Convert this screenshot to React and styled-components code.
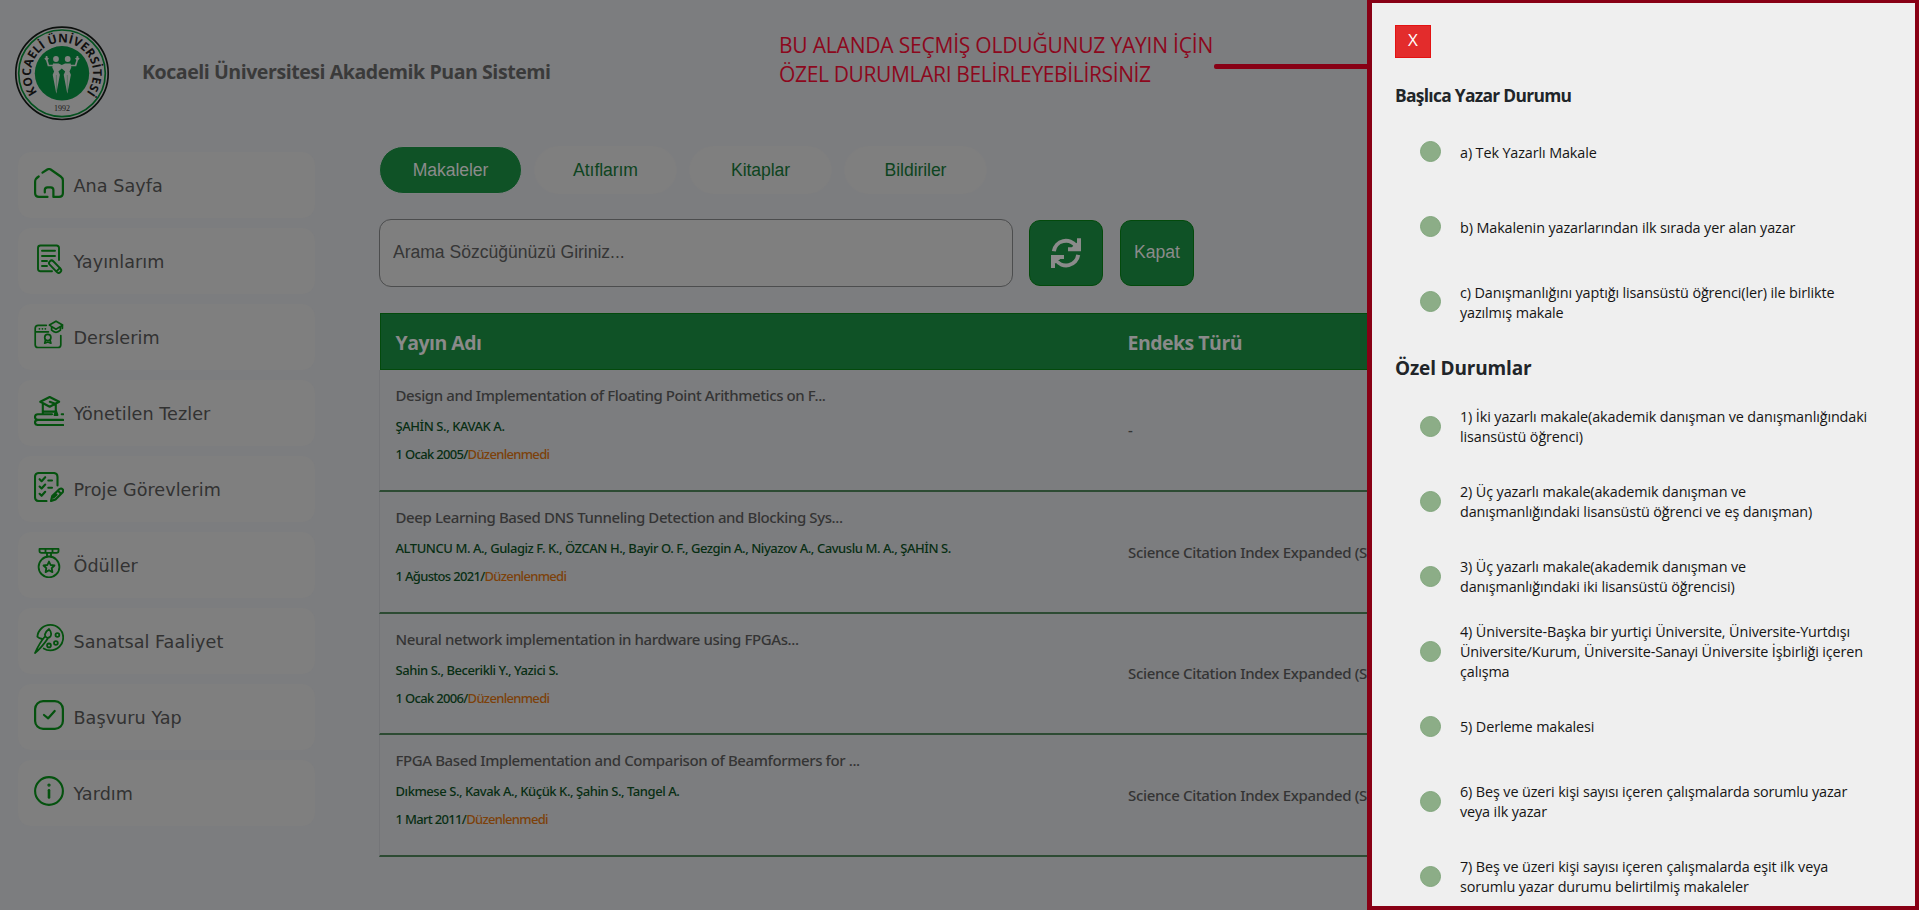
import React from 'react';
import styled, { createGlobalStyle } from 'styled-components';

const humanist = '"Open Sans", "Noto Sans", sans-serif';
const humanistMedium = '"Noto Sans", "Open Sans", sans-serif';
const grotesk = '"Liberation Sans", Arial, sans-serif';
const maroon = '#880015';
const iconGreen = '#04520e';

const GlobalStyle = createGlobalStyle`
  *, *::before, *::after { box-sizing: border-box; }
  body { margin: 0; background: #7c7d7f; font-family: ${humanist}; }
  button, input { font: inherit; }
`;

const Page = styled.div`
  position: relative;
  display: flex;
  flex-direction: column;
  width: 1919px;
  height: 910px;
  overflow: hidden;
  background: #7c7d7f;
`;

const Header = styled.header`
  display: flex;
  align-items: center;
  gap: 32px;
  height: 146px;
  padding-left: 14px;
`;

const AppTitle = styled.h1`
  margin: 0 0 2px;
  color: #3a3a3a;
  font-size: 19.6px;
  font-weight: 700;
  letter-spacing: -0.47px;
  line-height: 28px;
`;

const Body = styled.div`
  display: flex;
  gap: 64px;
  padding-left: 18px;
`;

const Sidebar = styled.nav`
  display: flex;
  flex: none;
  flex-direction: column;
  gap: 10px;
  width: 297px;
  padding-top: 6px;
`;

const NavItem = styled.a`
  display: flex;
  gap: 9.5px;
  height: 66px;
  padding: 16px;
  border-radius: 13px;
  background: #7f7f7f;
  color: #323232;
`;

const NavIcon = styled.svg`
  display: block;
  flex: none;
  width: 30px;
  height: 30px;
  fill: none;
  stroke: ${iconGreen};
  stroke-width: ${(p) => p.$stroke || 1.9};
  stroke-linecap: round;
  stroke-linejoin: round;
`;

const NavLabel = styled.span`
  margin-top: 3px;
  font-family: "DejaVu Sans", Verdana, sans-serif;
  font-size: 17.6px;
  letter-spacing: 0.04px;
  line-height: 30px;
  white-space: nowrap;
`;

const Main = styled.main`
  flex: 1;
  min-width: 0;
`;

const Tabs = styled.div`
  display: flex;
  gap: 12px;
`;

const Tab = styled.button`
  width: 143px;
  height: 48px;
  padding: 0;
  border: 1px solid ${(p) => (p.$active ? '#7f8082' : '#7f7f7f')};
  border-radius: 24px;
  background: ${(p) => (p.$active ? '#0f5226' : '#7f7f7f')};
  color: ${(p) => (p.$active ? '#8b8b8b' : '#0d4420')};
  font-family: ${grotesk};
  font-size: 17.6px;
  letter-spacing: -0.08px;
`;

const SearchBar = styled.div`
  display: flex;
  align-items: center;
  gap: 16px;
  margin-top: 25px;
`;

const SearchInput = styled.input`
  width: 634px;
  height: 68px;
  padding: 0 13px 2px;
  border: 1px solid #4c4d4e;
  border-radius: 12px;
  outline: none;
  background: #7f7f7f;
  font-family: ${grotesk};
  font-size: 17.6px;
  letter-spacing: -0.04px;
  &::placeholder { color: #363636; opacity: 1; }
`;

const ActionButton = styled.button`
  display: flex;
  align-items: center;
  justify-content: center;
  width: 74px;
  height: 66px;
  padding: 0 0 2px;
  border: 1px solid #034a0c;
  border-radius: 11px;
  background: #0f5226;
  color: #8b8b8b;
  font-family: ${grotesk};
  font-size: 17.6px;

  & + & { margin-left: 1px; }
`;

const RefreshIcon = styled.svg`
  width: 30px;
  height: 30px;
  margin-top: 2px;
  fill: none;
  stroke: #8b8b8b;
  stroke-width: 4;
`;

const Table = styled.div`
  margin-top: 26px;
`;

const TableRow = styled.div`
  display: grid;
  grid-template-columns: 732px 1fr;
  align-items: center;
  height: ${(p) => p.$height}px;
  border-left: 1px solid #747578;
  border-bottom: 2px solid #2d4b33;
`;

const TableHead = styled(TableRow)`
  height: 57px;
  margin-left: 1px;
  border: solid #034a0c;
  border-width: 1px 0 1px 1px;
  background: #0f5226;
  color: #8a8a8a;
  font-size: 19.5px;
  font-weight: 700;
  letter-spacing: -0.52px;
  line-height: 28px;
`;

const HeadCell = styled.div`
  padding: 2px 0 0 14.5px;
`;

const Publication = styled.div`
  display: flex;
  flex-direction: column;
  align-self: start;
  padding: 15px 0 0 15.5px;
  white-space: nowrap;
  font-family: ${humanistMedium};
  font-weight: 500;
`;

const PubTitle = styled.div`
  color: #343434;
  font-size: 15px;
  letter-spacing: -0.4px;
  line-height: 20px;
`;

const Authors = styled.div`
  margin-top: 12px;
  color: #082e13;
  font-size: 13px;
  letter-spacing: -0.44px;
  line-height: 18px;
`;

const PubDate = styled(Authors)`
  margin-top: 10px;
  letter-spacing: -0.68px;
`;

const Status = styled.span`
  color: #7c410a;
`;

const IndexCell = styled.div`
  padding: 0 0 1px 16px;
  color: #343434;
  font-family: ${humanistMedium};
  font-size: 15px;
  font-weight: 500;
  letter-spacing: -0.32px;
  line-height: 20px;
  white-space: nowrap;
`;

const Callout = styled.div`
  position: absolute;
  top: 31px;
  left: 779px;
  display: flex;
  width: 589px;
`;

const CalloutText = styled.p`
  flex: none;
  width: 435px;
  margin: 0;
  color: #8c081d;
  font-size: 21px;
  line-height: 28.5px;
  white-space: nowrap;
`;

const CalloutRow = styled.span`
  display: block;
  letter-spacing: ${(p) => p.$tracking}px;
`;

const CalloutLine = styled.div`
  flex: 1;
  height: 5px;
  margin-top: 33px;
  border-radius: 2px 0 0 2px;
  background: ${maroon};
`;

const Drawer = styled.aside`
  position: absolute;
  top: 0;
  right: 0;
  width: 552px;
  height: 910px;
  overflow: hidden;
  padding: 22px 0 0 23px;
  border: solid ${maroon};
  border-width: 3px 4px 4px 5px;
  background: #efefef;
`;

const CloseButton = styled.button`
  display: block;
  width: 36px;
  height: 33px;
  padding: 0 0 4px;
  border: 1px solid #e31212;
  background: #e32c2c;
  color: #fff;
  font-size: 17px;
  line-height: 24px;
`;

const SectionTitle = styled.h2`
  margin: ${(p) => (p.$large ? '16px 0 8px' : '25px 0 7px')};
  color: #212529;
  font-size: ${(p) => (p.$large ? 19 : 17.4)}px;
  font-weight: 700;
  letter-spacing: ${(p) => (p.$large ? '-0.16px' : '-0.7px')};
  line-height: ${(p) => (p.$large ? 26 : 24)}px;
`;

const Option = styled.label`
  display: flex;
  align-items: center;
  gap: 19px;
  height: 75px;
  padding-left: 25px;
`;

const Radio = styled.span`
  flex: none;
  width: 21px;
  height: 21px;
  border: 1px solid #80a67c;
  border-radius: 50%;
  background: #8cad87;
`;

const OptionText = styled.span`
  padding-top: ${(p) => (p.$lowered ? 3 : 1)}px;
  color: #151515;
  font-size: 14.4px;
  letter-spacing: -0.12px;
  line-height: 20px;
  white-space: pre;
`;

const Seal = styled.svg`
  flex: none;
  width: 96px;
  height: 96px;
`;

const UniversitySeal = () => (
  <Seal viewBox="0 0 96 96">
    <circle cx="48" cy="48.3" r="46.2" fill="#7f7f7f" stroke="#0c0f0d" strokeWidth="1.7" />
    <circle cx="48" cy="48.3" r="43.3" fill="none" stroke="#04511f" strokeWidth="1.7" />
    <circle cx="48" cy="48.3" r="27.2" fill="#045426" />
    <path id="seal-arc" d="M23.5 67.5A31 31 0 1 1 72.5 67.5" fill="none" />
    <text fill="#111" fontFamily="Open Sans, sans-serif" fontSize="12" fontWeight="700">
      <textPath href="#seal-arc" textLength="138" lengthAdjust="spacing">KOCAELİ ÜNİVERSİTESİ</textPath>
    </text>
    <text x="48" y="86" textAnchor="middle" fill="#1a1a1a" fontFamily="Liberation Serif, serif" fontSize="8">1992</text>
    <g fill="#7f8380">
      <circle cx="42" cy="34" r="2.9" />
      <circle cx="53.7" cy="34" r="2.9" />
      <path d="M39 38.5h5.6l3.2 1.6 3.3-1.6h5.6l.6 4-1.8 4 1.4 3.2-3.6 19-3.6-19 1.5-3.2-3.4-3-3.4 3 1.5 3.2-3.6 19-3.6-19 1.4-3.2-1.8-4z" />
    </g>
    <path d="M40 40.5h-5.6l-1.6-5.6M32.6 31v4M31 33l1.6 2 1.7-2M56 40.5h5.6l1.6-5.6M63.4 31v4M61.7 33l1.7 2 1.6-2" fill="none" stroke="#7f8380" strokeWidth="1.7" />
    <path d="M42.4 50v16M53.3 50v16" stroke="#3f6a4d" strokeWidth=".6" />
  </Seal>
);

const navItems = [
  {
    label: 'Ana Sayfa',
    stroke: 2.2,
    art: (
      <path d="M8.5 4.7l4.8-3.2q1.7-1 3.4 0l10 7Q28.9 10 28.9 12.5V25q0 3.9-3.9 3.9h-5.6V22q0-2.7-2.7-2.7h-3.2q-2.7 0-2.7 2.7v2.4M4.7 8.5Q1.1 10.6 1.1 14v11q0 3.9 4 3.9h8.4" />
    ),
  },
  {
    label: 'Yayınlarım',
    art: (
      <>
        <path d="M25 16V4q0-2.5-2.5-2.5h-16Q4 1.5 4 4v20.8q0 2.5 2.5 2.5H18M8 6.8h13M8 12h13M8 17h5M8 22h5" />
        <rect x="13.6" y="20.2" width="15" height="5" rx="2.3" transform="rotate(46 21.1 22.7)" />
        <path d="M22.6 27.1l3.2-3" />
      </>
    ),
  },
  {
    label: 'Derslerim',
    stroke: 1.7,
    art: (
      <>
        <path d="M12.3 5.3H4.2q-3 0-3 3v16.4q0 2.8 2.8 2.8h20q2.8 0 2.8-2.8V15.5M1.4 11.8h13" />
        <path d="M5.4 8.8h.1M8.4 8.8h.1M11.3 8.8h.1" />
        <path d="M22 1.2l6.6 3.9L22 9.2l-6.6-4.1zM17.6 7v3.2q4.4 4.2 8.8 0V7M28.4 5.3v3" />
        <circle cx="13.8" cy="17.4" r="3.1" />
        <path d="M11.6 19.8l-.9 3.4 3.1-1.2 3.1 1.2-.9-3.4" />
      </>
    ),
  },
  {
    label: 'Yönetilen Tezler',
    stroke: 2.1,
    art: (
      <>
        <path d="M15.7 1l9.4 4.8-9.4 4.9-9.4-4.9zM8.8 8v9.5M8.8 15.6h11.5M15.8 5.8l6 2.3v7.4" />
        <path d="M22 15l-1.4 4h2.8z" />
        <path d="M29.2 18.2h-1.5M18 18.2H3.8Q1 18.2 1 21t2.8 2.9h25.4M3.8 23.9Q1 24.2 1 26.5t2.8 2.5h25.4" />
      </>
    ),
  },
  {
    label: 'Proje Görevlerim',
    stroke: 2.1,
    art: (
      <>
        <path d="M23.5 13.5V5q0-4-4-4H5Q1 1 1 5v20q0 4 4 4h7.5" />
        <path d="M5.6 7.2l2 2 3.6-4M5.6 14.5l2 2 3.6-4M5.6 21.8l2 2 3.6-4M14.3 8.5H18M14.3 15.8H18" />
        <path d="M17 29l1.2-5 7.3-6.9q1.7-1.3 3 .1t.2 3l-7.2 7.2zM24 18.8l3 3M19.5 25.5l3-2.8" />
      </>
    ),
  },
  {
    label: 'Ödüller',
    stroke: 1.8,
    art: (
      <>
        <path d="M5.5.9h19V3q0 1.9-2 1.9h-15q-2 0-2-1.9zM11.5 1v3.5M18.5 1v3.5M13 5v3M17 5v3" />
        <circle cx="15" cy="18.9" r="10.4" />
        <path d="M15 13.5l1.6 3.5 3.9.5-2.8 2.7.7 3.9-3.4-1.9-3.4 1.9.7-3.9-2.8-2.7 3.9-.5z" />
      </>
    ),
  },
  {
    label: 'Sanatsal Faaliyet',
    stroke: 1.8,
    art: (
      <>
        <path d="M8.2 15q-3.600-.8-4.800-2.300C4 6 9.500.9 16.300.9 23.500.9 29.200 6.500 29.200 13.600S23.500 26.400 16.300 26.400q-3.700 0-6.600-2" />
        <circle cx="23.4" cy="11" r="1.9" />
        <circle cx="21.9" cy="19" r="1.9" />
        <circle cx="15" cy="21.4" r="1.9" />
        <path d="M15 5q3.300 4 1.500 7.300-1.200 2-3.500 1.400-2.400-1-2-3.400Q11.600 7.500 15 5zM11 12.500Q6 18 1 29q6.500-5 13.300-15.200" />
      </>
    ),
  },
  {
    label: 'Başvuru Yap',
    stroke: 2.2,
    art: (
      <>
        <rect x="1.1" y="1.1" width="27.8" height="27.8" rx="8" />
        <path d="M10 15l4.200 3.300 6.500-7.300" />
      </>
    ),
  },
  {
    label: 'Yardım',
    stroke: 2.1,
    art: (
      <>
        <circle cx="15" cy="15" r="13.9" />
        <path d="M15 14.2v7.2" strokeWidth="2.6" />
        <circle cx="15" cy="9.1" r=".6" />
      </>
    ),
  },
];

const tabs = ['Makaleler', 'Atıflarım', 'Kitaplar', 'Bildiriler'];

const publications = [
  {
    title: 'Design and Implementation of Floating Point Arithmetics on F...',
    authors: 'ŞAHİN S., KAVAK A.',
    date: '1 Ocak 2005',
    index: '-',
    height: 122,
  },
  {
    title: 'Deep Learning Based DNS Tunneling Detection and Blocking Sys...',
    authors: 'ALTUNCU M. A., Gulagiz F. K., ÖZCAN H., Bayir O. F., Gezgin A., Niyazov A., Cavuslu M. A., ŞAHİN S.',
    date: '1 Ağustos 2021',
    index: 'Science Citation Index Expanded (SCI-EXPANDED)',
    height: 122,
  },
  {
    title: 'Neural network implementation in hardware using FPGAs...',
    authors: 'Sahin S., Becerikli Y., Yazici S.',
    date: '1 Ocak 2006',
    index: 'Science Citation Index Expanded (SCI-EXPANDED)',
    height: 121,
  },
  {
    title: 'FPGA Based Implementation and Comparison of Beamformers for ...',
    authors: 'Dıkmese S., Kavak A., Küçük K., Şahin S., Tangel A.',
    date: '1 Mart 2011',
    index: 'Science Citation Index Expanded (SCI-EXPANDED)',
    height: 122,
  },
];

const authorOptions = [
  'a) Tek Yazarlı Makale',
  'b) Makalenin yazarlarından ilk sırada yer alan yazar',
  'c) Danışmanlığını yaptığı lisansüstü öğrenci(ler) ile birlikte\nyazılmış makale',
];

const specialOptions = [
  '1) İki yazarlı makale(akademik danışman ve danışmanlığındaki\nlisansüstü öğrenci)',
  '2) Üç yazarlı makale(akademik danışman ve\ndanışmanlığındaki lisansüstü öğrenci ve eş danışman)',
  '3) Üç yazarlı makale(akademik danışman ve\ndanışmanlığındaki iki lisansüstü öğrencisi)',
  '4) Üniversite-Başka bir yurtiçi Üniversite, Üniversite-Yurtdışı\nÜniversite/Kurum, Üniversite-Sanayi Üniversite İşbirliği içeren\nçalışma',
  '5) Derleme makalesi',
  '6) Beş ve üzeri kişi sayısı içeren çalışmalarda sorumlu yazar\nveya ilk yazar',
  '7) Beş ve üzeri kişi sayısı içeren çalışmalarda eşit ilk veya\nsorumlu yazar durumu belirtilmiş makaleler',
];

const OptionList = ({ items, lowered }) =>
  items.map((text) => (
    <Option key={text}>
      <Radio />
      <OptionText $lowered={lowered}>{text}</OptionText>
    </Option>
  ));

export default function App() {
  return (
    <>
      <GlobalStyle />
      <Page>
        <Header>
          <UniversitySeal />
          <AppTitle>Kocaeli Üniversitesi Akademik Puan Sistemi</AppTitle>
        </Header>
        <Body>
          <Sidebar>
            {navItems.map(({ label, stroke, art }) => (
              <NavItem key={label}>
                <NavIcon viewBox="0 0 30 30" $stroke={stroke}>{art}</NavIcon>
                <NavLabel>{label}</NavLabel>
              </NavItem>
            ))}
          </Sidebar>
          <Main>
            <Tabs>
              {tabs.map((tab, i) => (
                <Tab key={tab} $active={i === 0}>{tab}</Tab>
              ))}
            </Tabs>
            <SearchBar>
              <SearchInput placeholder="Arama Sözcüğünüzü Giriniz..." />
              <ActionButton aria-label="Yenile">
                <RefreshIcon viewBox="0 0 30 30">
                  <path d="M2.8 13.3A12.2 12.2 0 0 1 25 8.2M28 .3V11.3H17M21.500 11.300L28 5.500" />
                  <path d="M27.200 16.900A12.200 12.200 0 0 1 5 22M2 30V18.900H13M8.500 18.900L2 24.700" />
                </RefreshIcon>
              </ActionButton>
              <ActionButton>Kapat</ActionButton>
            </SearchBar>
            <Table>
              <TableHead>
                <HeadCell>Yayın Adı</HeadCell>
                <HeadCell>Endeks Türü</HeadCell>
              </TableHead>
              {publications.map((pub) => (
                <TableRow key={pub.title} $height={pub.height}>
                  <Publication>
                    <PubTitle>{pub.title}</PubTitle>
                    <Authors>{pub.authors}</Authors>
                    <PubDate>{pub.date}/<Status>Düzenlenmedi</Status></PubDate>
                  </Publication>
                  <IndexCell>{pub.index}</IndexCell>
                </TableRow>
              ))}
            </Table>
          </Main>
        </Body>
        <Callout>
          <CalloutText>
            <CalloutRow $tracking={-0.2}>BU ALANDA SEÇMİŞ OLDUĞUNUZ YAYIN İÇİN</CalloutRow>
            <CalloutRow $tracking={-0.36}>ÖZEL DURUMLARI BELİRLEYEBİLİRSİNİZ</CalloutRow>
          </CalloutText>
          <CalloutLine />
        </Callout>
        <Drawer>
          <CloseButton>X</CloseButton>
          <SectionTitle>Başlıca Yazar Durumu</SectionTitle>
          <OptionList items={authorOptions} lowered />
          <SectionTitle $large>Özel Durumlar</SectionTitle>
          <OptionList items={specialOptions} />
        </Drawer>
      </Page>
    </>
  );
}
